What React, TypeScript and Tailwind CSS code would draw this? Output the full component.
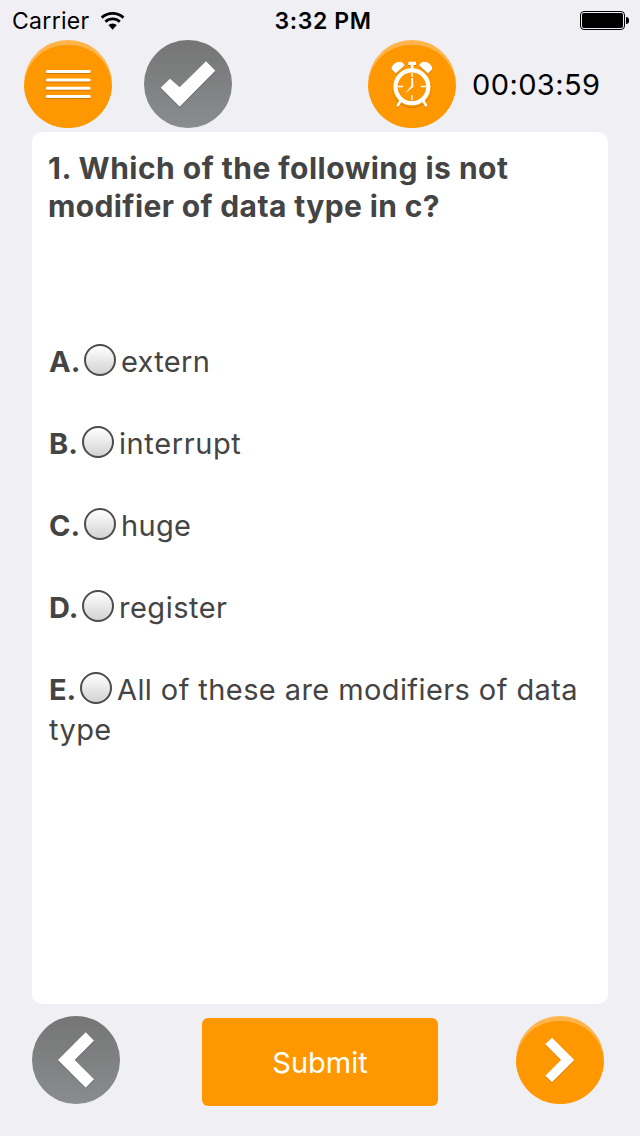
import type { ReactNode } from 'react'

function WifiIcon() {
  return (
    <svg className="h-5 w-[26px]" viewBox="0 0 26 20" fill="none" stroke="#000" strokeWidth="2.8">
      <path d="M1.7 6.6A16.3 16.3 0 0 1 23.5 6.6" />
      <path d="M5.4 10.7A10.7 10.7 0 0 1 19.8 10.7" />
      <path d="M12.6 18.7L8.4 14A6.3 6.3 0 0 1 16.8 14Z" fill="#000" stroke="none" />
    </svg>
  )
}

function Battery() {
  return (
    <div className="flex items-center gap-px">
      <div className="h-[19px] w-[45px] rounded-[4px] border border-black p-px">
        <div className="h-full w-full rounded-[2px] bg-black" />
      </div>
      <div className="h-[7px] w-[3px] rounded-r-full bg-black" />
    </div>
  )
}

function OrangeButton({ id, label, children }: { id: string; label: string; children: ReactNode }) {
  return (
    <button aria-label={label} className="h-[88px] w-[88px] shrink-0">
      <svg className="h-full w-full" viewBox="0 0 88 88">
        <clipPath id={id}>
          <circle cx="44" cy="44" r="44" />
        </clipPath>
        <g clipPath={`url(#${id})`}>
          <rect width="88" height="88" fill="#ffb54c" />
          <ellipse cx="44" cy="46.4" rx="44" ry="41.7" fill="#ff9800" />
          <rect y="46" width="88" height="42" fill="#ff9800" />
        </g>
        <g style={{ filter: 'drop-shadow(0.5px 1px 0.7px rgba(120,60,0,0.35))' }}>{children}</g>
      </svg>
    </button>
  )
}

function GrayButton({ id, label, points }: { id: string; label: string; points: string }) {
  return (
    <button aria-label={label} className="h-[88px] w-[88px] shrink-0">
      <svg className="h-full w-full" viewBox="0 0 88 88">
        <linearGradient id={id} x1="0" y1="0" x2="0" y2="1">
          <stop offset="0" stopColor="#757575" />
          <stop offset="1" stopColor="#898d8e" />
        </linearGradient>
        <circle cx="44" cy="44" r="44" fill={`url(#${id})`} />
        <polygon points={points} fill="#fff" style={{ filter: 'drop-shadow(0.5px 1px 0.7px rgba(40,40,60,0.4))' }} />
      </svg>
    </button>
  )
}

function ClockBell() {
  return <path d="M27.6 33.4L23.8 29.4C22.8 26 27 21.6 32 21.7C34 21.8 36 23.4 36.6 25.4Z" fill="#fff" />
}

function AlarmClock() {
  return (
    <>
      <ClockBell />
      <g transform="translate(87.8 0) scale(-1 1)">
        <ClockBell />
      </g>
      <path d="M40.3 21.8H48V25H45.4V30H42.8V25H40.3Z" fill="#fff" />
      <circle cx="43.9" cy="46.8" r="20" fill="#ff9800" />
      <path d="M42.8 25H45.4V30H42.8Z" fill="#fff" />
      <g fill="none" stroke="#fff">
        <circle cx="43.9" cy="46.8" r="16.4" strokeWidth="4.2" />
        <path d="M33 60L29.9 65.4M54.8 60L57.9 65.4" strokeWidth="2.6" strokeLinecap="round" />
        <path d="M30 46.5H35.2M52.8 46.5H58M44 55.2V60M44 33V37" strokeWidth="1.4" />
      </g>
      <path d="M43.4 38H45L45.4 46.8L36.9 53.6L43.2 46Z" fill="#fff" />
    </>
  )
}

const options = [
  { letter: 'A', text: 'extern', width: 'w-[35px]', spacing: 'tracking-[0.3px]' },
  { letter: 'B', text: 'interrupt', width: 'w-[33px]', spacing: 'tracking-[0.6px]' },
  { letter: 'C', text: 'huge', width: 'w-[35px]', spacing: 'tracking-[0.3px]' },
  { letter: 'D', text: 'register', width: 'w-[33px]', spacing: 'tracking-[0.5px]' },
  { letter: 'E', text: 'All of these are modifiers of data type', width: 'w-[31px]', spacing: 'tracking-[0.41px]' },
]

export default function App() {
  return (
    <main className="flex h-[1136px] w-[640px] flex-col bg-[#efeff4] font-['Inter',sans-serif] text-black">
      <header className="grid h-10 grid-cols-[1fr_auto_1fr] items-center pr-[11px] pl-3 leading-10">
        <div className="flex items-center gap-[10px]">
          <span className="pt-px text-[23px] tracking-[0.3px]">Carrier</span>
          <WifiIcon />
        </div>
        <span className="pt-px pl-[5px] text-[23px] font-semibold tracking-[0.6px]">3:32 PM</span>
        <div className="flex justify-end">
          <Battery />
        </div>
      </header>

      <nav className="flex h-[88px] items-center pl-6">
        <OrangeButton id="menu-clip" label="Menu">
          <path
            d="M23.3 31.5H65.3M23.3 39.9H65.3M23.3 48.2H65.3M23.3 56.5H65.3"
            stroke="#fff"
            strokeWidth="3"
            strokeLinecap="round"
          />
        </OrangeButton>
        <div className="ml-8 flex">
          <GrayButton id="check-fill" label="Mark" points="16.7,47.7 26,38.7 35.7,47.3 62,21.3 71.3,30.7 35.7,66.7" />
        </div>
        <div className="ml-[136px] flex">
          <OrangeButton id="clock-clip" label="Timer">
            <AlarmClock />
          </OrangeButton>
        </div>
        <span className="ml-4 pt-[2px] text-[29px] tracking-[0.4px] whitespace-nowrap">00:03:59</span>
      </nav>

      <section className="mx-8 mt-1 h-[872px] rounded-[10px] bg-white pt-[17px] pr-[14px] pl-[17px] text-[29px] text-[#444]">
        <h1 className="h-[193px] text-[30px] leading-[38px] font-bold whitespace-nowrap">
          <span className="-ml-px block tracking-[0.48px]">1. Which of the following is not</span>
          <span className="-ml-px block tracking-[0.38px]">modifier of data type in c?</span>
        </h1>
        <div className="flex flex-col gap-[42px] leading-10">
          {options.map((option) => (
            <label key={option.letter} className="block">
              <b className={`inline-block ${option.width}`}>{`${option.letter}.`}</b>
              <span className="mr-[5px] inline-block h-8 w-8 rounded-full border-2 border-[#4c4c4c] bg-linear-to-b from-white to-[#d3d3d3] align-[-4px]" />
              <span className={option.spacing}>{option.text}</span>
            </label>
          ))}
        </div>
      </section>

      <footer className="flex items-start pt-3 pl-8">
        <GrayButton id="prev-fill" label="Previous" points="26,44 53.7,16.3 62,24.7 42.7,44 62,63.3 53.7,71.7" />
        <button className="mt-[2px] mr-[78px] ml-[82px] h-[88px] w-[236px] rounded-[6px] bg-[#ff9800] pt-[2px] text-[29px] text-white">
          Submit
        </button>
        <OrangeButton id="next-clip" label="Next">
          <polygon points="36,21.7 58.3,44 36,66.3 29.3,59.7 45,44 29.3,28.3" fill="#fff" />
        </OrangeButton>
      </footer>
    </main>
  )
}
